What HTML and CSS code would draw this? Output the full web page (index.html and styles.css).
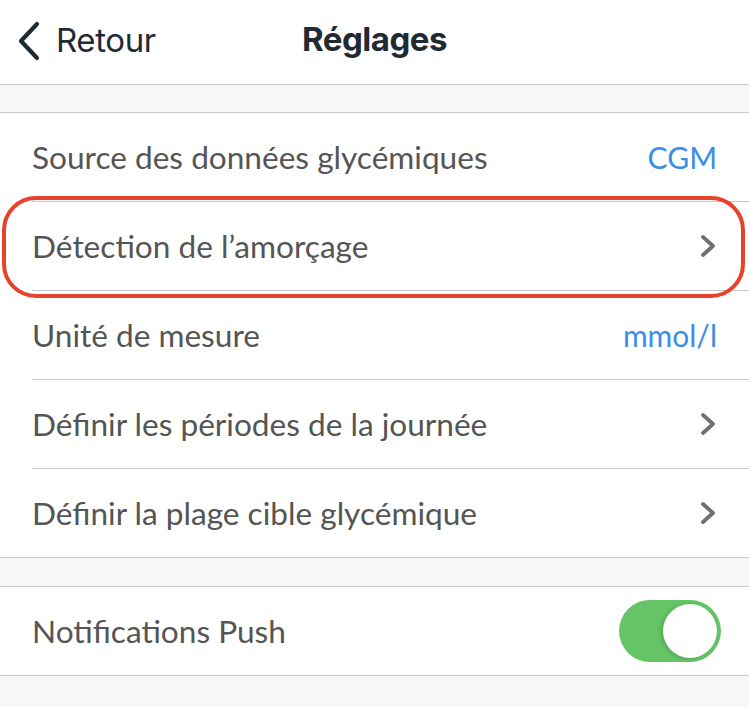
FILE: index.html
```html
<!DOCTYPE html>
<html lang="fr">
<head>
<meta charset="utf-8">
<link rel="stylesheet" href="styles.css">
</head>
<body>
<div class="page">
  <header class="nav">
    <div class="back">
      <svg class="back-icon" width="26" height="40" viewBox="0 0 26 40"><path d="M21 3 L5 20 L21 37" fill="none" stroke="#1f2a33" stroke-width="4.2" stroke-linecap="round" stroke-linejoin="round"/></svg>
      <span>Retour</span>
    </div>
    <div class="title">Réglages</div>
  </header>
  <div class="gap"></div>
  <section class="group">
    <div class="row"><span class="label">Source des données glycémiques</span><span class="value">CGM</span></div>
    <div class="row highlighted"><span class="label">Détection de l’amorçage</span><svg class="chev" width="20" height="24" viewBox="0 0 20 24"><path d="M4 3 L14 12 L4 21" fill="none" stroke="#707070" stroke-width="3.8" stroke-linecap="round" stroke-linejoin="round"/></svg><div class="ring"></div></div>
    <div class="row"><span class="label">Unité de mesure</span><span class="value">mmol/l</span></div>
    <div class="row"><span class="label">Définir les périodes de la journée</span><svg class="chev" width="20" height="24" viewBox="0 0 20 24"><path d="M4 3 L14 12 L4 21" fill="none" stroke="#707070" stroke-width="3.8" stroke-linecap="round" stroke-linejoin="round"/></svg></div>
    <div class="row last"><span class="label">Définir la plage cible glycémique</span><svg class="chev" width="20" height="24" viewBox="0 0 20 24"><path d="M4 3 L14 12 L4 21" fill="none" stroke="#707070" stroke-width="3.8" stroke-linecap="round" stroke-linejoin="round"/></svg></div>
  </section>
  <div class="gap gap2"></div>
  <section class="group">
    <div class="row last"><span class="label">Notifications Push</span><div class="toggle"><div class="knob"></div></div></div>
  </section>
</div>
</body>
</html>
```
FILE: styles.css
```css
html, body { margin: 0; padding: 0; }
body {
  background: #f7f7f7;
  width: 749px;
  height: 707px;
  overflow: hidden;
}
.page { display: flex; flex-direction: column; }
.nav {
  height: 84px;
  background: #fff;
  border-bottom: 1px solid #c8c8c8;
  display: flex;
  align-items: center;
  position: relative;
  font-family: Inter, "Noto Sans", sans-serif;
  color: #1f2a33;
}
.back {
  display: flex;
  align-items: center;
  gap: 14px;
  padding-left: 16px;
  font-size: 33px;
  letter-spacing: -0.4px;
  margin-top: -2px;
}
.back span { margin-top: -2px; }
.title {
  position: absolute;
  left: 0; right: 0;
  text-align: center;
  font-size: 33px;
  font-weight: 700;
  letter-spacing: -0.5px;
  margin-top: -6px;
  pointer-events: none;
}
.gap { height: 27px; }
.gap2 { height: 28px; }
.group {
  background: #fff;
  border-top: 1px solid #c8c8c8;
  border-bottom: 1px solid #c8c8c8;
  padding-left: 32px;
  font-family: Lato, "Noto Sans", sans-serif;
}
.row {
  height: 88px;
  display: flex;
  align-items: center;
  justify-content: space-between;
  padding-right: 32px;
  border-bottom: 1px solid #c8c8c8;
  position: relative;
}
.row.last { border-bottom: none; }
.label {
  font-size: 31.6px;
  color: #555;
}
.value {
  font-size: 30px;
  color: #3a8ee6;
}
.chev { margin-right: -2px; }
.ring {
  position: absolute;
  left: -30px;
  right: 4px;
  top: -6px;
  bottom: -8px;
  border: 4px solid #e8432a;
  border-radius: 34px;
  pointer-events: none;
}
.toggle {
  width: 102px;
  height: 62px;
  border-radius: 31px;
  background: #64c466;
  display: flex;
  align-items: center;
  justify-content: flex-end;
  padding-right: 4px;
  box-sizing: border-box;
  margin-right: -4px;
}
.knob {
  width: 54px;
  height: 54px;
  border-radius: 50%;
  background: #fff;
  box-shadow: -2px 1px 4px rgba(0,0,0,0.15);
}
```
